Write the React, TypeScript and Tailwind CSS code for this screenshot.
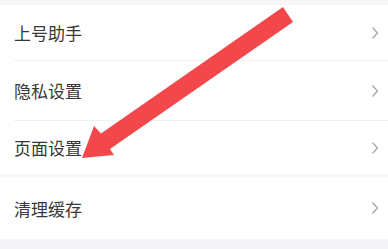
import React from "react";

function Chevron() {
  return (
    <svg width="8" height="14" viewBox="0 0 8 14" className="shrink-0">
      <path d="M1.5 1.5 L6.5 7 L1.5 12.5" fill="none" stroke="#a6a6a6" strokeWidth="1.3" />
    </svg>
  );
}

function Row({ label, h, divider }: { label: string; h: string; divider?: "inset" | "full" | "none" }) {
  return (
    <div className="relative">
      <div className={`flex items-center justify-between pl-[14px] pr-[9px] ${h}`}>
        <span className="text-[17px] leading-none text-[#383838]">{label}</span>
        <Chevron />
      </div>
      {divider === "inset" && <div className="ml-[14px] h-px bg-[#f0f0f0]" />}
      {divider === "full" && <div className="h-[3px] bg-[#f7f7f7]" />}
    </div>
  );
}

export default function App() {
  return (
    <div
      className="relative w-[388px] h-[249px] overflow-hidden bg-white"
      style={{ fontFamily: '"Noto Sans CJK SC", "Noto Sans", sans-serif' }}
    >
      <div className="h-[5px] bg-[#f6f6f6]" />
      <Row label="上号助手" h="h-[55px]" divider="inset" />
      <Row label="隐私设置" h="h-[59px]" divider="inset" />
      <Row label="页面设置" h="h-[53px]" divider="full" />
      <Row label="清理缓存" h="h-[62px]" divider="none" />
      <div className="h-[12px] bg-[#f4f4f6]" />
      <svg className="absolute left-0 top-0" width="388" height="249" viewBox="0 0 388 249">
        <polygon
          points="283,7 293,22 110,149 114,155 82,158 94,126 101,133.5"
          fill="#f2474b"
        />
      </svg>
    </div>
  );
}
